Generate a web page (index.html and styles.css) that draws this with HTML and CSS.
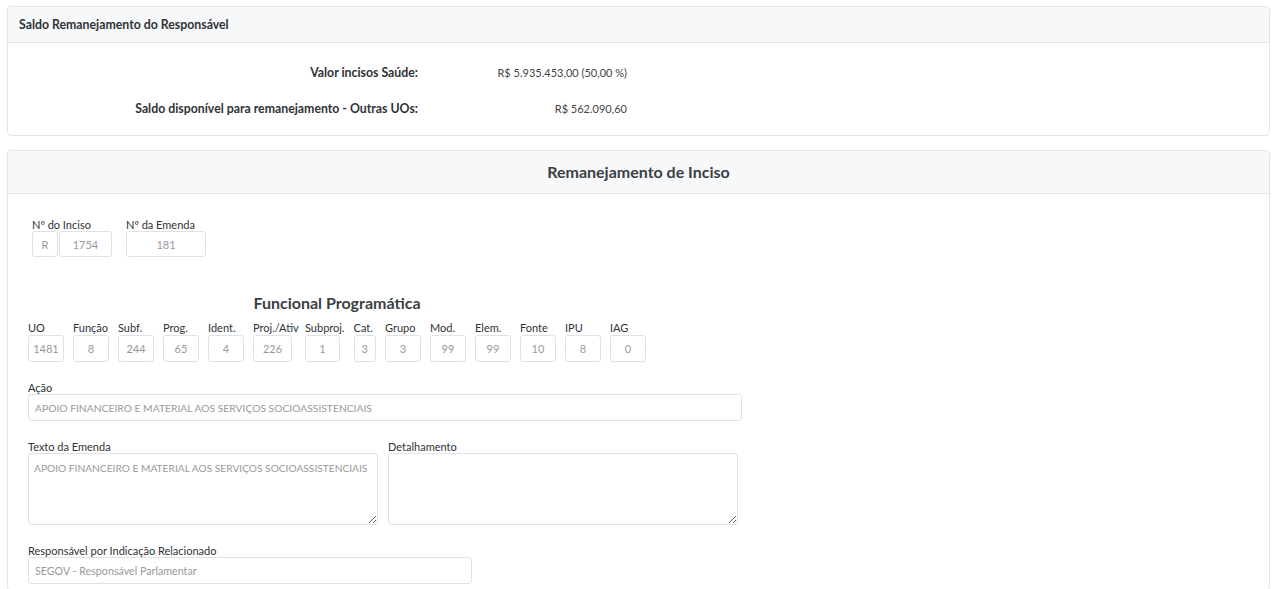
FILE: index.html
```html
<!DOCTYPE html>
<html lang="pt-BR">
<head>
<meta charset="utf-8">
<title>Remanejamento de Inciso</title>
<link rel="stylesheet" href="styles.css">
</head>
<body>
<section class="card card-saldo">
  <header class="card-header"><h2 class="card-title-sm">Saldo Remanejamento do Responsável</h2></header>
  <div class="card-body saldo-body">
    <div class="saldo-row">
      <span class="saldo-label">Valor incisos Saúde:</span>
      <span class="saldo-value">R$ 5.935.453,00 (50,00 %)</span>
    </div>
    <div class="saldo-row">
      <span class="saldo-label">Saldo disponível para remanejamento - Outras UOs:</span>
      <span class="saldo-value">R$ 562.090,60</span>
    </div>
  </div>
</section>

<section class="card card-form">
  <header class="card-header header-center"><h2 class="card-title-lg">Remanejamento de Inciso</h2></header>
  <div class="card-body form-body">
    <div class="inciso-row">
      <div class="field">
        <label class="lbl">Nº do Inciso</label>
        <div class="pair">
          <input class="inp center w-r" value="R" readonly>
          <input class="inp center w-inciso" value="1754" readonly>
        </div>
      </div>
      <div class="field">
        <label class="lbl">Nº da Emenda</label>
        <input class="inp center w-emenda" value="181" readonly>
      </div>
    </div>

    <div class="funcional">
      <h3 class="func-title">Funcional Programática</h3>
      <div class="func-row">
        <div class="fcol"><label class="lbl">UO</label><input class="inp center" value="1481" readonly></div>
        <div class="fcol"><label class="lbl">Função</label><input class="inp center" value="8" readonly></div>
        <div class="fcol"><label class="lbl">Subf.</label><input class="inp center" value="244" readonly></div>
        <div class="fcol"><label class="lbl">Prog.</label><input class="inp center" value="65" readonly></div>
        <div class="fcol"><label class="lbl">Ident.</label><input class="inp center" value="4" readonly></div>
        <div class="fcol fcol-proj"><label class="lbl">Proj./Ativ</label><input class="inp center" value="226" readonly></div>
        <div class="fcol fcol-subproj"><label class="lbl">Subproj.</label><input class="inp center" value="1" readonly></div>
        <div class="fcol fcol-cat"><label class="lbl">Cat.</label><input class="inp center" value="3" readonly></div>
        <div class="fcol"><label class="lbl">Grupo</label><input class="inp center" value="3" readonly></div>
        <div class="fcol"><label class="lbl">Mod.</label><input class="inp center" value="99" readonly></div>
        <div class="fcol"><label class="lbl">Elem.</label><input class="inp center" value="99" readonly></div>
        <div class="fcol"><label class="lbl">Fonte</label><input class="inp center" value="10" readonly></div>
        <div class="fcol"><label class="lbl">IPU</label><input class="inp center" value="8" readonly></div>
        <div class="fcol"><label class="lbl">IAG</label><input class="inp center" value="0" readonly></div>
      </div>
    </div>

    <div class="field block acao">
      <label class="lbl">Ação</label>
      <input class="inp text w-acao" value="APOIO FINANCEIRO E MATERIAL AOS SERVIÇOS SOCIOASSISTENCIAIS" readonly>
    </div>

    <div class="text-row">
      <div class="field block">
        <label class="lbl">Texto da Emenda</label>
        <textarea class="inp area w-texto" readonly>APOIO FINANCEIRO E MATERIAL AOS SERVIÇOS SOCIOASSISTENCIAIS</textarea>
      </div>
      <div class="field block">
        <label class="lbl">Detalhamento</label>
        <textarea class="inp area w-detal" readonly></textarea>
      </div>
    </div>

    <div class="field block">
      <label class="lbl">Responsável por Indicação Relacionado</label>
      <input class="inp text w-resp" value="SEGOV - Responsável Parlamentar" readonly>
    </div>
  </div>
</section>
</body>
</html>
```

FILE: styles.css
```css
* { box-sizing: border-box; }

body {
  margin: 6px 6px 0 7px;
  font-family: Lato, "Open Sans", sans-serif;
  font-size: 11px;
  color: #333;
  background: #fff;
}

.card {
  border: 1px solid #e3e5e8;
  border-radius: 4px;
  background: #fff;
}

.card-header {
  background: #f7f8fa;
  border-bottom: 1px solid #e3e5e8;
  border-radius: 4px 4px 0 0;
}

.card-title-sm {
  margin: 0;
  padding: 0 11px;
  height: 35px;
  line-height: 35px;
  font-size: 12.3px;
  font-weight: 700;
  color: #2f3337;
}

.header-center { text-align: center; }

.card-title-lg {
  margin: 0;
  height: 42px;
  line-height: 42px;
  font-size: 16px;
  font-weight: 700;
  color: #3a3f44;
}

/* Saldo card */
.saldo-body {
  padding: 11px 0 9px;
}

.saldo-row {
  display: grid;
  grid-template-columns: 410px 209px;
  height: 36px;
  align-items: center;
}

.saldo-label {
  text-align: right;
  font-weight: 700;
  font-size: 12.3px;
  color: #2f3337;
}

.saldo-value {
  text-align: right;
  color: #444;
}

.card-form { margin-top: 14px; }

.form-body {
  padding: 25px 20px 6px;
}

/* fields */
.lbl {
  display: block;
  line-height: 12px;
  height: 12px;
  white-space: nowrap;
  color: #2f3337;
}

.inp {
  display: block;
  height: 26px;
  border: 1px solid #dfe1e4;
  border-radius: 3px;
  background: #fff;
  font-family: inherit;
  font-size: 11px;
  color: #999;
  padding: 0;
  outline: none;
}

.center { text-align: center; }
.text { padding: 0 6px; font-size: 10.3px; }

.inciso-row {
  display: flex;
  gap: 14px;
  padding-left: 4px;
}

.pair { display: flex; gap: 1px; }

.w-r { width: 26px; }
.w-inciso { width: 53px; }
.w-emenda { width: 80px; }

/* funcional */
.funcional {
  margin-top: 36px;
  width: 618px;
}

.func-title {
  margin: 0 0 9px;
  text-align: center;
  font-size: 16px;
  line-height: 20px;
  font-weight: 700;
  color: #3a3f44;
}

.func-row {
  display: flex;
  gap: 9px;
}

.fcol { width: 36px; }
.fcol .lbl { margin-bottom: 1px; }
.fcol .inp { width: 36px; height: 27px; }

.fcol-proj { width: 43px; }
.fcol-proj .inp { width: 39px; }
.fcol-subproj { width: 40px; }
.fcol-subproj .inp { width: 35px; }
.fcol-cat { width: 23px; }
.fcol-cat .inp { width: 22px; }

.acao { margin-top: 20px; }

.block .inp { height: 27px; }
.w-acao { width: 714px; }

.text-row {
  display: flex;
  gap: 10px;
  margin-top: 20px;
}

.area {
  height: 72px;
  padding: 7px 5px;
  resize: both;
  line-height: 14px;
  font-size: 10.2px;
  overflow: hidden;
}

.block .area { height: 72px; }

.w-texto { width: 350px; }
.w-detal { width: 350px; }

.text-row + .block { margin-top: 20px; }
.w-resp { width: 444px; font-size: 10.7px; }
```
